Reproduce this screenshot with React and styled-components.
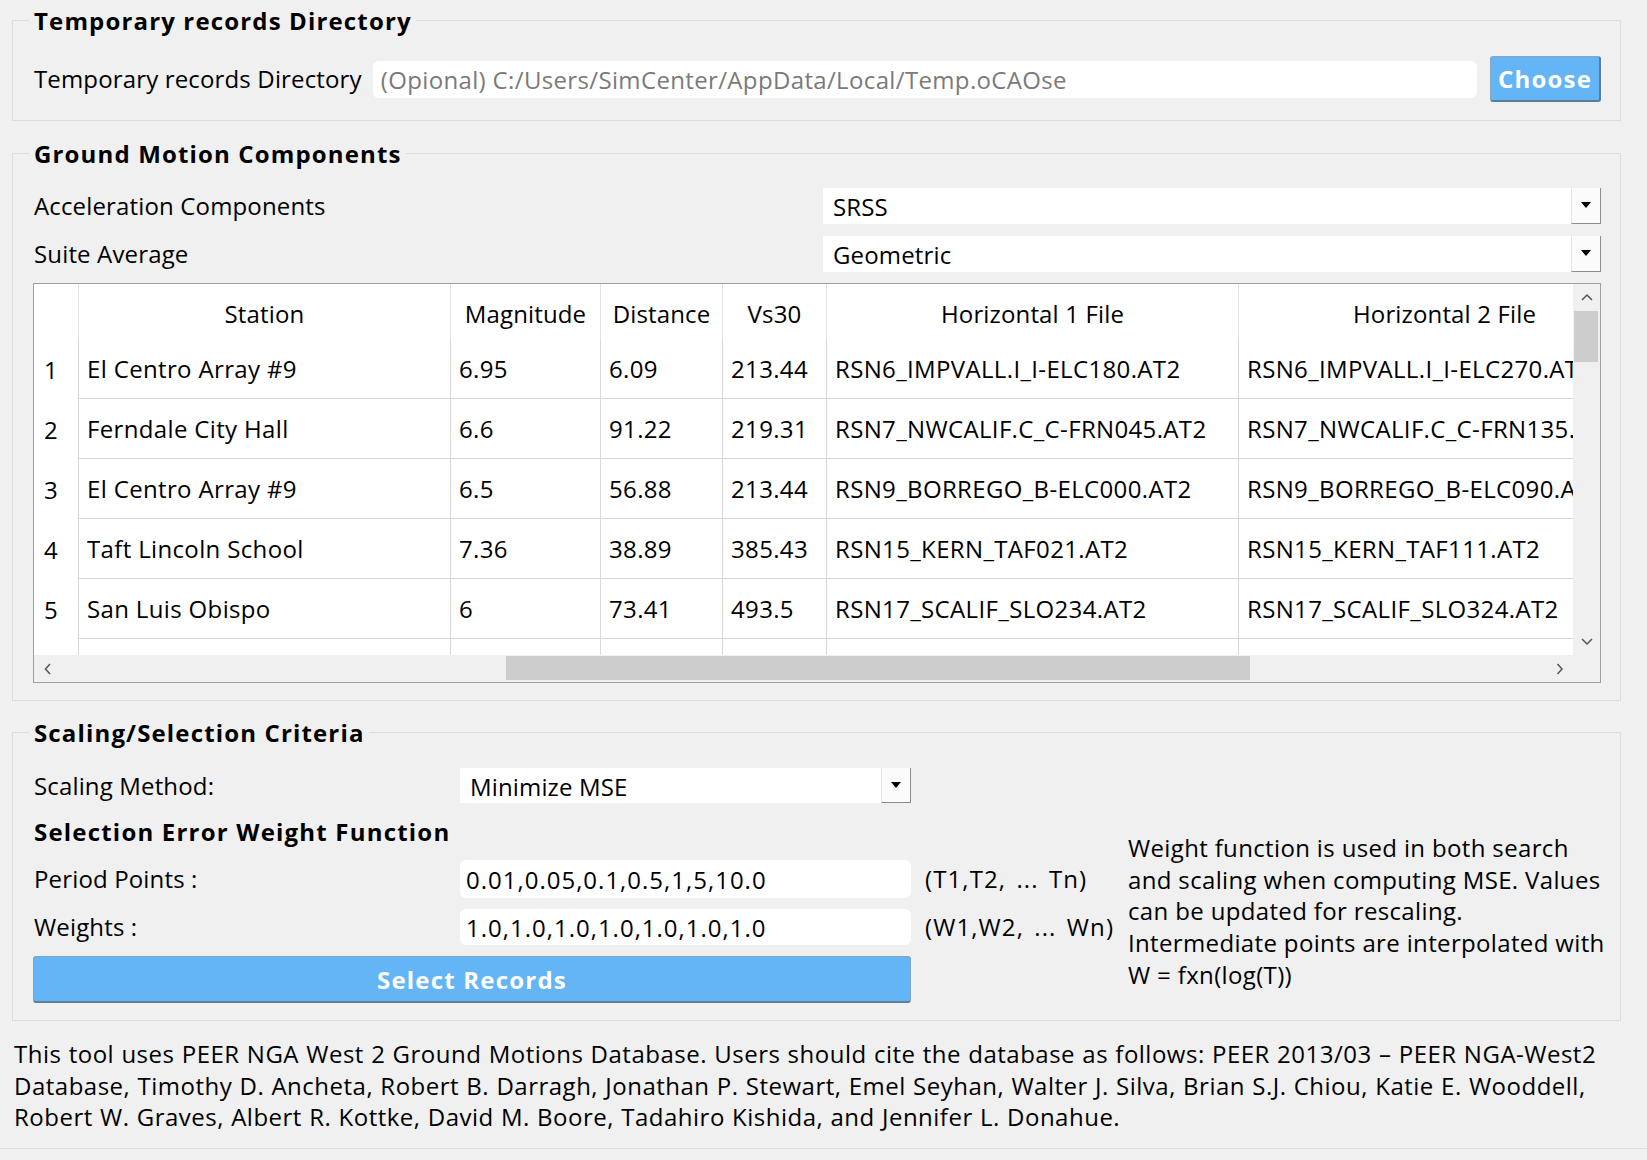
import React from 'react';
import styled, { createGlobalStyle } from 'styled-components';

const FONT = `"Open Sans", "Noto Sans", "DejaVu Sans", sans-serif`;

const GlobalStyle = createGlobalStyle`
  html, body { margin: 0; padding: 0; background: #f0f0f0; }
  body { font-family: ${FONT}; color: #000; }
  *, *::before, *::after { box-sizing: border-box; }
`;

const Root = styled.div`
  width: 1647px;
  height: 1160px;
  overflow: hidden;
  background: #f0f0f0;
  font-family: ${FONT};
  font-size: 24px;
  line-height: 32px;
  letter-spacing: 0.15px;
  color: #000;
  display: flex;
  flex-direction: column;
`;

const Content = styled.div`
  padding: 4px 26px 0 12px;
  display: flex;
  flex-direction: column;
`;

const Group = styled.fieldset`
  margin: ${(p) => p.$mt || 0}px 0 0 0;
  padding: ${(p) => p.$pt}px 19px ${(p) => p.$pb}px 20px;
  border: 1px solid #dcdcdc;
  min-width: 0;
`;

const Legend = styled.legend`
  font-weight: 700;
  letter-spacing: 1.15px;
  padding: 0 4px 0 5px;
  margin-left: -4px;
  line-height: 32px;
  transform: translateY(1px);
`;

const DirRow = styled.div`
  display: flex;
  align-items: center;
  height: 46px;
`;

const Label = styled.span`
  white-space: nowrap;
  padding-left: 1px;
`;

const TextInput = styled.input`
  height: ${(p) => p.$h || 37}px;
  border: none;
  outline: none;
  border-radius: 6px;
  background: #fff;
  font-family: ${FONT};
  font-size: 24px;
  letter-spacing: 1px;
  color: #000;
  padding: 0 6px;
  min-width: 0;
  &::placeholder { color: #7a7a7a; letter-spacing: 0.35px; }
`;

const DirInput = styled(TextInput)`
  flex: 1;
  margin-left: 11px;
  padding-left: 8px;
`;

const BlueButton = styled.button`
  background: #64b5f6;
  color: #fff;
  font-family: ${FONT};
  font-size: 24px;
  font-weight: 700;
  letter-spacing: 1.2px;
  border-radius: 3px;
  cursor: pointer;
  padding: 0;
`;

const ChooseButton = styled(BlueButton)`
  width: 111px;
  height: 46px;
  margin-left: 13px;
  border: 1px solid #86a9c2;
  border-right: 2px solid #5b7c93;
  border-bottom: 2px solid #5b7c93;
`;

const SelectButton = styled(BlueButton)`
  grid-column: 1 / 3;
  height: 47px;
  border: 1px solid #7fa6c2;
  border-bottom: 2px solid #5f8196;
`;

const ComboGrid = styled.div`
  display: grid;
  grid-template-columns: 1fr 778px;
  grid-auto-rows: 36px;
  row-gap: 12px;
  align-items: center;
`;

const Combo = styled.div`
  height: ${(p) => p.$h || 36}px;
  background: #fff;
  display: flex;
  align-items: center;
  padding-left: 10px;
`;

const ComboText = styled.span`
  flex: 1;
  white-space: nowrap;
  padding-top: 2px;
`;

const ComboArrow = styled.div`
  width: 30px;
  align-self: stretch;
  background: #fbfbfb;
  border-left: 1px solid #e6e6e6;
  border-right: 1px solid #8c8c8c;
  border-bottom: 1px solid #8c8c8c;
  display: flex;
  align-items: center;
  justify-content: center;
`;

const TableFrame = styled.div`
  margin-top: 11px;
  height: 400px;
  border: 1px solid #a0a0a0;
  background: #f0f0f0;
  display: grid;
  grid-template-columns: 1fr 27px;
  grid-template-rows: 1fr 27px;
`;

const Viewport = styled.div`
  overflow: hidden;
  background: #fff;
`;

const TRow = styled.div`
  display: flex;
  height: ${(p) => p.$h}px;
`;

const HeadCell = styled.div`
  flex: 0 0 ${(p) => p.$w}px;
  border-right: 1px solid #e4e4e4;
  display: flex;
  align-items: center;
  justify-content: center;
  white-space: nowrap;
  overflow: hidden;
  padding-top: 4px;
`;

const NumCell = styled.div`
  flex: 0 0 ${(p) => p.$w}px;
  border-right: 1px solid #d8d8d8;
  display: flex;
  align-items: center;
  padding-left: 10px;
  padding-top: 2px;
`;

const Cell = styled.div`
  flex: 0 0 ${(p) => p.$w}px;
  border-right: 1px solid #d8d8d8;
  border-bottom: 1px solid #d8d8d8;
  display: flex;
  align-items: center;
  padding-left: 8px;
  letter-spacing: 0.35px;
  white-space: nowrap;
  overflow: hidden;
`;

const VBar = styled.div`
  display: flex;
  flex-direction: column;
  background: #f0f0f0;
`;

const HBar = styled.div`
  display: flex;
  background: #f0f0f0;
`;

const ArrowBtn = styled.div`
  flex: 0 0 27px;
  display: flex;
  align-items: center;
  justify-content: center;
`;

const VTrack = styled.div`
  flex: 1;
  padding: 0 2px 0 1px;
`;

const HTrack = styled.div`
  flex: 1;
  padding: 1px 0 2px 0;
`;

const VHandle = styled.div`
  height: ${(p) => p.$size}px;
  margin-top: ${(p) => p.$offset}px;
  background: #cdcdcd;
`;

const HHandle = styled.div`
  height: 100%;
  width: ${(p) => p.$size}px;
  margin-left: ${(p) => p.$offset}px;
  background: #cdcdcd;
`;

const Corner = styled.div`
  background: #f0f0f0;
`;

const CriteriaGrid = styled.div`
  display: grid;
  grid-template-columns: 427px 451px 202px 1fr;
  grid-template-rows: 35px 35px 38px 36px 47px;
  row-gap: 11px;
  align-items: center;
`;

const SubTitle = styled.div`
  grid-column: 1 / 4;
  font-weight: 700;
  letter-spacing: 1.2px;
  white-space: nowrap;
  padding-left: 1px;
`;

const Hint = styled.span`
  padding-left: 14px;
  letter-spacing: 1.1px;
  word-spacing: 3px;
  white-space: nowrap;
`;

const Description = styled.div`
  grid-column: 4;
  grid-row: 2 / 6;
  align-self: start;
  margin-top: 18px;
  padding-left: 15px;
  line-height: 31.7px;
  letter-spacing: 0.35px;
  white-space: nowrap;
`;

const Footer = styled.div`
  margin-top: 17px;
  margin-left: 2px;
  line-height: 31.5px;
  letter-spacing: 0.5px;
  word-spacing: 0.5px;
  white-space: nowrap;
`;

const BottomRule = styled.div`
  margin-top: 15px;
  border-top: 1px solid #dcdcdc;
`;

const Triangle = () => (
  <svg width="10" height="7" viewBox="0 0 10 7">
    <polygon points="0,0 10,0 5,6" fill="#000" />
  </svg>
);

const Chevron = ({ dir }) => {
  const pts = {
    up: '1,7 6,2 11,7',
    down: '1,2 6,7 11,2',
    left: '6,1 1.5,6 6,11',
    right: '1.5,1 6,6 1.5,11',
  }[dir];
  const vertical = dir === 'up' || dir === 'down';
  return (
    <svg width={vertical ? 12 : 8} height={vertical ? 9 : 12} viewBox={vertical ? '0 0 12 9' : '0 0 8 12'}>
      <polyline points={pts} fill="none" stroke="#555" strokeWidth="1.5" />
    </svg>
  );
};

const ComboBox = ({ value, h }) => (
  <Combo $h={h}>
    <ComboText>{value}</ComboText>
    <ComboArrow>
      <Triangle />
    </ComboArrow>
  </Combo>
);

const COLS = [
  { key: 'station', title: 'Station', w: 372 },
  { key: 'mag', title: 'Magnitude', w: 150 },
  { key: 'dist', title: 'Distance', w: 122 },
  { key: 'vs30', title: 'Vs30', w: 104 },
  { key: 'h1', title: 'Horizontal 1 File', w: 412 },
  { key: 'h2', title: 'Horizontal 2 File', w: 412 },
];

const ROWS = [
  { station: 'El Centro Array #9', mag: '6.95', dist: '6.09', vs30: '213.44', h1: 'RSN6_IMPVALL.I_I-ELC180.AT2', h2: 'RSN6_IMPVALL.I_I-ELC270.AT2' },
  { station: 'Ferndale City Hall', mag: '6.6', dist: '91.22', vs30: '219.31', h1: 'RSN7_NWCALIF.C_C-FRN045.AT2', h2: 'RSN7_NWCALIF.C_C-FRN135.AT2' },
  { station: 'El Centro Array #9', mag: '6.5', dist: '56.88', vs30: '213.44', h1: 'RSN9_BORREGO_B-ELC000.AT2', h2: 'RSN9_BORREGO_B-ELC090.AT2' },
  { station: 'Taft Lincoln School', mag: '7.36', dist: '38.89', vs30: '385.43', h1: 'RSN15_KERN_TAF021.AT2', h2: 'RSN15_KERN_TAF111.AT2' },
  { station: 'San Luis Obispo', mag: '6', dist: '73.41', vs30: '493.5', h1: 'RSN17_SCALIF_SLO234.AT2', h2: 'RSN17_SCALIF_SLO324.AT2' },
  { station: '', mag: '', dist: '', vs30: '', h1: '', h2: '' },
];

const RecordsTable = () => (
  <TableFrame>
    <Viewport>
      <TRow $h={55}>
        <HeadCell $w={45} />
        {COLS.map((c) => (
          <HeadCell key={c.key} $w={c.w}>{c.title}</HeadCell>
        ))}
      </TRow>
      {ROWS.map((r, i) => (
        <TRow key={i} $h={60}>
          <NumCell $w={45}>{r.station ? i + 1 : ''}</NumCell>
          {COLS.map((c) => (
            <Cell key={c.key} $w={c.w}>{r[c.key]}</Cell>
          ))}
        </TRow>
      ))}
    </Viewport>
    <VBar>
      <ArrowBtn><Chevron dir="up" /></ArrowBtn>
      <VTrack><VHandle $offset={0} $size={51} /></VTrack>
      <ArrowBtn><Chevron dir="down" /></ArrowBtn>
    </VBar>
    <HBar>
      <ArrowBtn><Chevron dir="left" /></ArrowBtn>
      <HTrack><HHandle $offset={445} $size={744} /></HTrack>
      <ArrowBtn><Chevron dir="right" /></ArrowBtn>
    </HBar>
    <Corner />
  </TableFrame>
);

export default function App() {
  return (
    <>
      <GlobalStyle />
      <Root>
        <Content>
          <Group $pt={20} $pb={18}>
            <Legend>Temporary records Directory</Legend>
            <DirRow>
              <Label>Temporary records Directory</Label>
              <DirInput placeholder="(Opional) C:/Users/SimCenter/AppData/Local/Temp.oCAOse" readOnly />
              <ChooseButton>Choose</ChooseButton>
            </DirRow>
          </Group>

          <Group $mt={16} $pt={19} $pb={17}>
            <Legend>Ground Motion Components</Legend>
            <ComboGrid>
              <Label>Acceleration Components</Label>
              <ComboBox value="SRSS" />
              <Label>Suite Average</Label>
              <ComboBox value="Geometric" />
            </ComboGrid>
            <RecordsTable />
          </Group>

          <Group $mt={15} $pt={20} $pb={17}>
            <Legend>Scaling/Selection Criteria</Legend>
            <CriteriaGrid>
              <Label>Scaling Method:</Label>
              <ComboBox value="Minimize MSE" h={35} />
              <span />
              <span />
              <SubTitle>Selection Error Weight Function</SubTitle>
              <Description>
                Weight function is used in both search<br />
                and scaling when computing MSE. Values<br />
                can be updated for rescaling.<br />
                Intermediate points are interpolated with<br />
                W = fxn(log(T))
              </Description>
              <Label>Period Points :</Label>
              <TextInput $h={38} defaultValue="0.01,0.05,0.1,0.5,1,5,10.0" />
              <Hint>(T1,T2, ... Tn)</Hint>
              <Label>Weights :</Label>
              <TextInput $h={36} defaultValue="1.0,1.0,1.0,1.0,1.0,1.0,1.0" />
              <Hint>(W1,W2, ... Wn)</Hint>
              <SelectButton>Select Records</SelectButton>
            </CriteriaGrid>
          </Group>

          <Footer>
            This tool uses PEER NGA West 2 Ground Motions Database. Users should cite the database as follows: PEER 2013/03 – PEER NGA-West2<br />
            Database, Timothy D. Ancheta, Robert B. Darragh, Jonathan P. Stewart, Emel Seyhan, Walter J. Silva, Brian S.J. Chiou, Katie E. Wooddell,<br />
            Robert W. Graves, Albert R. Kottke, David M. Boore, Tadahiro Kishida, and Jennifer L. Donahue.
          </Footer>
        </Content>
        <BottomRule />
      </Root>
    </>
  );
}
